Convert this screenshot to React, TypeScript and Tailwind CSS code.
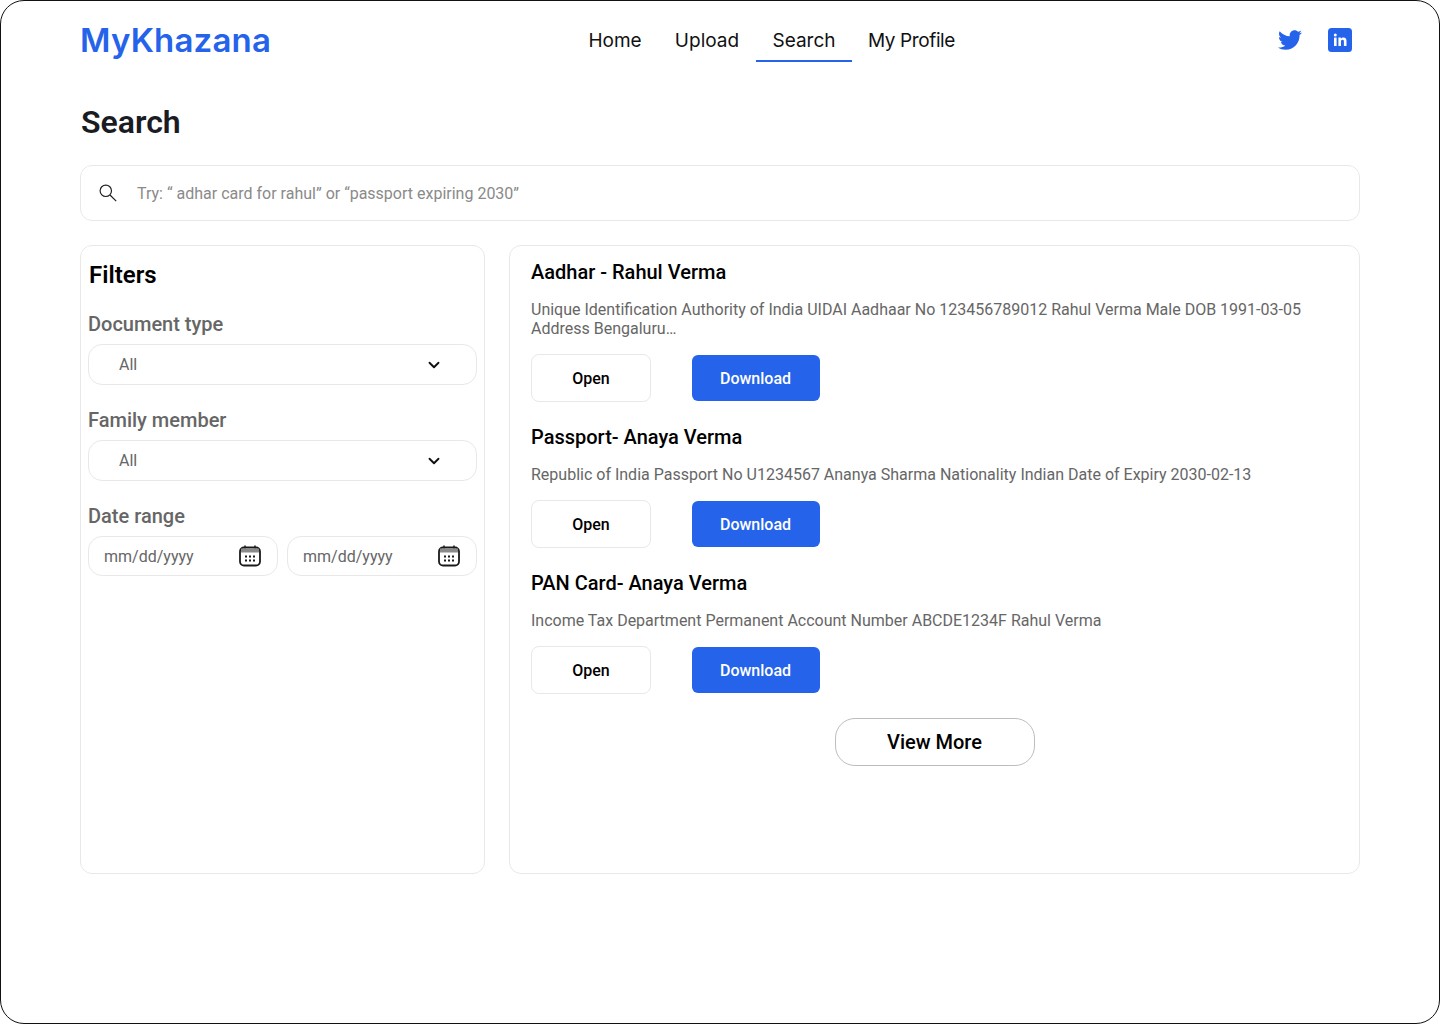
import React from 'react';
import { ChevronDown } from 'lucide-react';
import { FaTwitter } from 'react-icons/fa';

const navItems = [
  { label: 'Home', style: 'w-[86px]', active: false },
  { label: 'Upload', style: 'w-[98px]', active: false },
  { label: 'Search', style: 'w-[96px]', active: true },
  { label: 'My Profile', style: 'w-[119px] tracking-[-0.4px]', active: false },
];

const documents = [
  {
    title: 'Aadhar - Rahul Verma',
    text: 'Unique Identification Authority of India UIDAI Aadhaar No 123456789012 Rahul Verma Male DOB 1991-03-05 Address Bengaluru…',
  },
  {
    title: 'Passport- Anaya Verma',
    text: 'Republic of India Passport No U1234567 Ananya Sharma Nationality Indian Date of Expiry 2030-02-13',
  },
  {
    title: 'PAN Card- Anaya Verma',
    text: 'Income Tax Department Permanent Account Number ABCDE1234F Rahul Verma',
  },
];

const SearchIcon = () => (
  <svg width="18" height="18" viewBox="0 0 18 18" fill="none" stroke="#222222" strokeWidth="1.2">
    <circle cx="6.8" cy="6.8" r="5.7" />
    <path d="M11 11l6.2 6.2" />
  </svg>
);

const CalendarIcon = () => (
  <svg width="22" height="22" viewBox="0 0 22 22" fill="none">
    <path d="M6 0.5v3M16 0.5v3" stroke="#1a1a1a" strokeWidth="1.5" />
    <rect x="1" y="2.5" width="20" height="18" rx="4" stroke="#1a1a1a" strokeWidth="1.8" />
    <rect x="2" y="3.5" width="18" height="4" fill="#8a8a8a" />
    <g fill="#1a1a1a">
      <rect x="6" y="10.5" width="2" height="2" />
      <rect x="10" y="10.5" width="2" height="2" />
      <rect x="14" y="10.5" width="2" height="2" />
      <rect x="6" y="14.5" width="2" height="2" />
      <rect x="10" y="14.5" width="2" height="2" />
      <rect x="14" y="14.5" width="2" height="2" />
    </g>
  </svg>
);

const LinkedinIcon = () => (
  <svg width="24" height="24" viewBox="0 0 24 24">
    <rect width="24" height="24" rx="3.5" fill="#2563eb" />
    <rect x="6" y="9.6" width="2.6" height="8.4" fill="#fff" />
    <circle cx="7.3" cy="7" r="1.5" fill="#fff" />
    <path d="M10.4 9.6h2.5v1.2c.5-.9 1.5-1.4 2.6-1.4 2.4 0 3 1.5 3 3.7V18h-2.6v-4.3c0-1.1-.2-2-1.4-2-1.2 0-1.5.9-1.5 2V18h-2.6z" fill="#fff" />
  </svg>
);

const FilterSelect = ({ label }: { label: string }) => (
  <div>
    <div className="text-[20px] leading-[24px] font-medium text-[#666666]">{label}</div>
    <div className="mt-2 h-[41px] flex items-center justify-between pl-[30px] pr-[33px] border border-[#e8e8e8] rounded-[14px] text-[16px] text-[#666666]">
      <span>All</span>
      <ChevronDown size={18} strokeWidth={2.5} color="#111111" />
    </div>
  </div>
);

const DateInput = () => (
  <div className="flex-1 h-[40px] flex items-center justify-between pl-[15px] pr-[16px] border border-[#e8e8e8] rounded-[14px] text-[16px] text-[#666666]">
    <span className="pt-[2px]">mm/dd/yyyy</span>
    <CalendarIcon />
  </div>
);

export default function App() {
  return (
    <div className="w-[1440px] h-[1024px] bg-white border border-[#111111] rounded-[24px] px-[79px] font-['Roboto',sans-serif] overflow-hidden">
      {/* Header */}
      <header className="h-[62px] flex items-start">
        <div className="mt-[17px] w-[192px] font-['Inter',sans-serif] font-semibold text-[33px] leading-[44px] tracking-[0.2px] text-[#2563eb]">
          MyKhazana
        </div>
        <nav className="ml-[300px] flex">
          {navItems.map((item) => (
            <div
              key={item.label}
              className={`${item.style} h-[61px] pt-[28px] text-center font-['Inter',sans-serif] text-[19px] leading-[24px] text-[#111111] border-b-2 ${
                item.active ? 'border-[#2563eb]' : 'border-transparent'
              }`}
            >
              {item.label}
            </div>
          ))}
        </nav>
        <div className="ml-auto mt-[27px] mr-2 flex items-center gap-[26px]">
          <FaTwitter size={24} color="#2563eb" />
          <LinkedinIcon />
        </div>
      </header>

      <h1 className="mt-[40px] ml-px text-[32px] leading-[38px] font-semibold text-[#1a1c24]">Search</h1>

      <div className="mt-[24px] h-[56px] flex items-center gap-[20px] pl-[18px] border border-[#e8e8e8] rounded-[12px]">
        <SearchIcon />
        <span className="pt-[2px] text-[16px] text-[#8a8a8a]">Try: “ adhar card for rahul” or “passport expiring 2030”</span>
      </div>

      <div className="mt-[24px] flex gap-[24px]">
        {/* Filters */}
        <aside className="w-[405px] h-[629px] border border-[#e8e8e8] rounded-[12px] pl-[7px] pr-[7px] pt-[15px]">
          <h2 className="ml-px text-[24px] leading-[28px] font-semibold text-black">Filters</h2>
          <div className="mt-[23px] flex flex-col gap-[23px]">
            <FilterSelect label="Document type" />
            <FilterSelect label="Family member" />
            <div>
              <div className="text-[20px] leading-[24px] font-medium text-[#666666]">Date range</div>
              <div className="mt-2 flex gap-[9px]">
                <DateInput />
                <DateInput />
              </div>
            </div>
          </div>
        </aside>

        {/* Results */}
        <section className="flex-1 h-[629px] border border-[#e8e8e8] rounded-[12px] pl-[21px] pr-[21px] pt-[14px]">
          <div className="flex flex-col gap-[23px]">
            {documents.map((doc) => (
              <article key={doc.title}>
                <h3 className="text-[20px] leading-[24px] font-medium text-black">{doc.title}</h3>
                <p className="mt-[16px] text-[16px] leading-[19px] text-[#666666]">{doc.text}</p>
                <div className="mt-[16px] flex items-center gap-[41px]">
                  <button className="w-[120px] h-[48px] pt-[2px] border border-[#e8e8e8] rounded-[8px] text-[16px] font-medium text-black">
                    Open
                  </button>
                  <button className="w-[128px] h-[46px] pt-[2px] pr-px bg-[#2563eb] rounded-[6px] text-[16px] font-medium text-white">
                    Download
                  </button>
                </div>
              </article>
            ))}
          </div>
          <div className="mt-[24px] flex justify-center">
            <button className="w-[200px] h-[48px] border border-[#bdbdbd] rounded-[20px] text-[20px] font-medium text-black">
              View More
            </button>
          </div>
        </section>
      </div>
    </div>
  );
}
